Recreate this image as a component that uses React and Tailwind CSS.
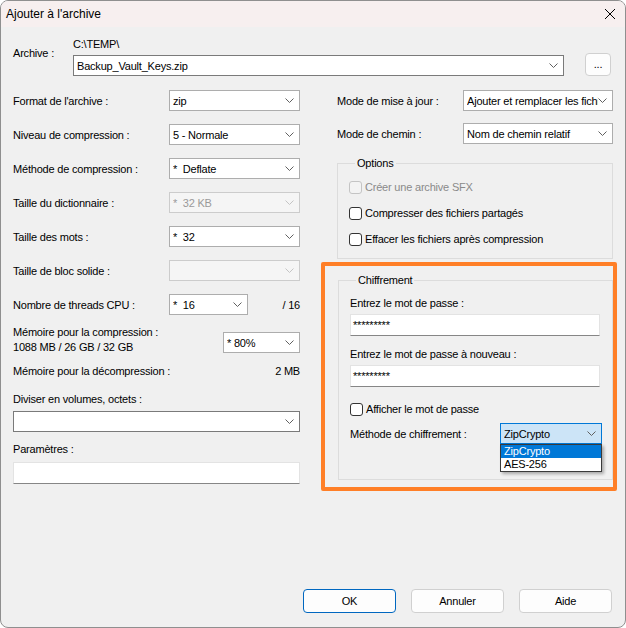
import React from 'react';

const Chevron = ({ color = '#606060' }) => (
  <svg width="9" height="5" viewBox="0 0 9 5" className="shrink-0">
    <path d="M0.5 0.5 L4.5 4.5 L8.5 0.5" fill="none" stroke={color} strokeWidth="1" />
  </svg>
);

const looks = {
  list: 'border-[#adadad] bg-white',
  edit: 'border-[#7a7a7a] bg-white',
  disabled: 'border-[#cccccc] bg-[#f5f5f5] text-[#9a9a9a]',
  focus: 'border-[#0078d7] bg-[#cce4f7]',
};

const Select = ({ value = '', width, variant = 'list' }) => (
  <div className={`flex h-[21px] items-center border pl-[3px] pr-[5px] ${looks[variant]} ${width}`}>
    <span className="flex-1 overflow-hidden whitespace-pre pr-[6px]">{value}</span>
    <Chevron color={variant === 'disabled' ? '#c4c4c4' : '#606060'} />
  </div>
);

const Row = ({ label, children }) => (
  <div className="flex h-[21px] items-center">
    <span className="w-[156px] shrink-0">{label}</span>
    {children}
  </div>
);

const Check = ({ label, disabled }) => (
  <div className="flex h-[14px] items-center gap-[3px]">
    <span
      className={`h-[13px] w-[13px] shrink-0 rounded-[3px] border ${
        disabled ? 'border-[#c4c4c4] bg-[#f3f3f3]' : 'border-[#333333] bg-white'
      }`}
    />
    <span className={disabled ? 'text-[#8a8a8a]' : ''}>{label}</span>
  </div>
);

const TextBox = ({ value = '', width }) => (
  <div className={`flex h-[22px] items-center border border-[#e3e3e3] border-b-[#868686] bg-white pl-[2px] ${width}`}>
    {value}
  </div>
);

const Btn = ({ children, primary }) => (
  <button
    className={`h-[24px] w-[93px] rounded-[4px] border bg-[#fdfdfd] ${
      primary ? 'border-[#0067c0]' : 'border-[#d0d0d0]'
    }`}
  >
    {children}
  </button>
);

export default function App() {
  return (
    <div className="flex h-[628px] w-[626px] flex-col overflow-hidden rounded-[8px] border border-[#8f8f8f] bg-[#f0f0f0] font-['Liberation_Sans',Arial,sans-serif] text-[11px] leading-[14px] tracking-[-0.2px] text-black">
      {/* title bar */}
      <div className="flex h-[26px] shrink-0 items-center justify-between bg-[#f7efef] pl-[5px] pr-[10px] text-[12px] tracking-normal">
        <span>Ajouter à l'archive</span>
        <svg width="10" height="10" viewBox="0 0 10 10">
          <path d="M0 0 L10 10 M10 0 L0 10" stroke="#000" strokeWidth="1" />
        </svg>
      </div>

      <div className="flex flex-1 flex-col pl-[12px] pt-[10px]">
        {/* archive */}
        <div className="flex">
          <span className="mt-[9px] w-[60px] shrink-0">Archive :</span>
          <div className="flex flex-col">
            <span>C:\TEMP\</span>
            <div className="mt-[4px]">
              <Select value="Backup_Vault_Keys.zip" width="w-[491px]" variant="edit" />
            </div>
          </div>
          <button className="ml-[21px] mt-[16px] h-[23px] w-[26px] rounded-[4px] border border-[#d0d0d0] bg-[#fdfdfd] leading-none">
            ...
          </button>
        </div>

        <div className="mt-[14px] flex gap-[21px]">
          {/* left column */}
          <div className="flex w-[287px] flex-col">
            <div className="flex flex-col gap-[13px]">
              <Row label="Format de l'archive :">
                <Select value="zip" width="w-[131px]" />
              </Row>
              <Row label="Niveau de compression :">
                <Select value="5 - Normale" width="w-[131px]" />
              </Row>
              <Row label="Méthode de compression :">
                <Select value="*  Deflate" width="w-[131px]" />
              </Row>
              <Row label="Taille du dictionnaire :">
                <Select value="*  32 KB" width="w-[131px]" variant="disabled" />
              </Row>
              <Row label="Taille des mots :">
                <Select value="*  32" width="w-[131px]" />
              </Row>
              <Row label="Taille de bloc solide :">
                <Select width="w-[131px]" variant="disabled" />
              </Row>
              <Row label="Nombre de threads CPU :">
                <Select value="*  16" width="w-[79px]" />
                <span className="flex-1 text-right">/ 16</span>
              </Row>
            </div>

            <div className="mt-[10px] flex justify-between">
              <div className="leading-[15px]">
                <div>Mémoire pour la compression :</div>
                <div>1088 MB / 26 GB / 32 GB</div>
              </div>
              <div className="mt-[7px]">
                <Select value="* 80%" width="w-[77px]" />
              </div>
            </div>

            <div className="mt-[9px] flex justify-between">
              <span>Mémoire pour la décompression :</span>
              <span>2 MB</span>
            </div>

            <span className="mt-[14px]">Diviser en volumes, octets :</span>
            <div className="mt-[5px]">
              <Select width="w-full" variant="edit" />
            </div>

            <span className="mt-[10px]">Paramètres :</span>
            <div className="mt-[6px]">
              <TextBox width="w-full" />
            </div>
          </div>

          {/* right column */}
          <div className="flex w-[296px] flex-col">
            <div className="flex flex-col pl-[16px] pr-[4px]">
              <div className="flex flex-col gap-[12px]">
                <div className="flex h-[21px] items-center">
                  <span className="w-[126px] shrink-0">Mode de mise à jour :</span>
                  <Select value="Ajouter et remplacer les fichiers" width="w-[150px]" />
                </div>
                <div className="flex h-[21px] items-center">
                  <span className="w-[126px] shrink-0">Mode de chemin :</span>
                  <Select value="Nom de chemin relatif" width="w-[150px]" />
                </div>
              </div>

              <fieldset className="mt-[12px] border border-[#dcdcdc] pb-[12px] pl-[11px] pt-[10px]">
                <legend className="ml-[6px] px-[2px]">Options</legend>
                <div className="flex flex-col gap-[12px]">
                  <Check label="Créer une archive SFX" disabled />
                  <Check label="Compresser des fichiers partagés" />
                  <Check label="Effacer les fichiers après compression" />
                </div>
              </fieldset>
            </div>

            {/* highlighted encryption block */}
            <div className="mt-[3px] rounded-[2px] border-[4px] border-[#ff7f27] pb-[7px] pt-[7px]">
              <fieldset className="ml-[13px] border border-[#dcdcdc] pb-[35px] pl-[11px] pr-[10px] pt-[9px]">
                <legend className="ml-[6px] px-[2px]">Chiffrement</legend>
                <div className="flex flex-col">
                  <span>Entrez le mot de passe :</span>
                  <div className="mt-[4px]">
                    <TextBox value="*********" width="w-[250px]" />
                  </div>
                  <span className="mt-[11px]">Entrez le mot de passe à nouveau :</span>
                  <div className="mt-[4px]">
                    <TextBox value="*********" width="w-[250px]" />
                  </div>
                  <div className="mt-[15px]">
                    <Check label="Afficher le mot de passe" />
                  </div>
                  <div className="mt-[7px] flex h-[21px] items-center justify-between">
                    <span>Méthode de chiffrement :</span>
                    <div className="relative">
                      <Select value="ZipCrypto" width="w-[102px]" variant="focus" />
                      <div className="absolute left-0 top-[21px] z-10 w-[102px] border border-[#3a3a3a] bg-white shadow-[2px_2px_3px_rgba(0,0,0,0.3)]">
                        <div className="h-[13px] bg-[#0078d7] pl-[3px] leading-[13px] text-white">ZipCrypto</div>
                        <div className="h-[13px] pl-[3px] leading-[13px]">AES-256</div>
                      </div>
                    </div>
                  </div>
                </div>
              </fieldset>
            </div>
          </div>
        </div>

        {/* footer buttons */}
        <div className="mt-auto flex justify-end gap-[15px] pb-[14px] pr-[13px]">
          <Btn primary>OK</Btn>
          <Btn>Annuler</Btn>
          <Btn>Aide</Btn>
        </div>
      </div>
    </div>
  );
}
